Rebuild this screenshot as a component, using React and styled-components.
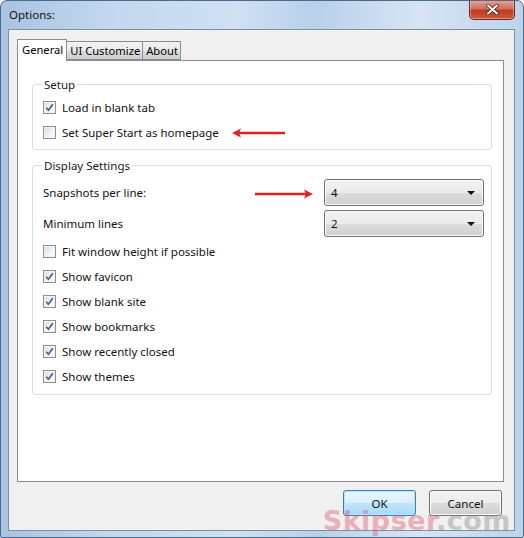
import styled, { createGlobalStyle } from "styled-components";

const GlobalStyle = createGlobalStyle`
  html, body {
    margin: 0;
    padding: 0;
    background: #ffffff;
  }
  body {
    font-family: "Noto Sans", "Open Sans", Arial, sans-serif;
    font-size: 11px;
    color: #000;
  }
`;

const Window = styled.div`
  position: relative;
  width: 524px;
  height: 538px;
  box-sizing: border-box;
  display: flex;
  flex-direction: column;
  padding: 0 8px 6px 7px;
  border: 1px solid #4e6a8a;
  border-radius: 7px 7px 2px 2px;
  background: linear-gradient(90deg, #a7c3e2 0%, #c2d7ee 20%, #cfe0f2 45%, #b9d0ea 60%, #d6e4f3 80%, #bcd3ea 100%);
  overflow: hidden;
`;

const TitleBar = styled.div`
  height: 28px;
  display: flex;
  align-items: flex-start;
`;

const Title = styled.div`
  align-self: center;
  padding-left: 1px;
  margin-top: -1px;
  font-size: 11.5px;
  color: #111;
`;

const CloseButton = styled.div`
  margin-left: auto;
  margin-top: -1px;
  width: 46px;
  height: 20px;
  box-sizing: border-box;
  border: 1px solid #6b2a20;
  border-top: none;
  border-radius: 0 0 5px 5px;
  background: linear-gradient(180deg, #e6a593 0%, #d0705a 45%, #b93d24 55%, #d2583a 100%);
  display: flex;
  align-items: center;
  justify-content: center;
  box-shadow: inset 0 0 0 1px rgba(255, 255, 255, 0.35);
`;

const Client = styled.div`
  flex: 1;
  display: flex;
  flex-direction: column;
  background: #f0f0f0;
  border: 1px solid #7c90a8;
  padding: 9px 12px 0 8px;
`;

const TabRow = styled.div`
  display: flex;
  align-items: flex-end;
  height: 21px;
  position: relative;
  z-index: 1;
`;

const Tab = styled.div`
  height: ${(p) => (p.$active ? "22px" : "19px")};
  box-sizing: border-box;
  padding: ${(p) => (p.$active ? "2px 3px 0 4px" : "1px 2px 0 3px")};
  border: 1px solid #898c95;
  border-bottom: ${(p) => (p.$active ? "none" : "1px solid #898c95")};
  margin-left: ${(p) => (p.$active ? "0" : "-1px")};
  margin-bottom: ${(p) => (p.$active ? "-1px" : "0")};
  background: ${(p) =>
    p.$active ? "#ffffff" : "linear-gradient(180deg, #f2f2f2 0%, #ebebeb 50%, #dddddd 51%, #cfcfcf 100%)"};
  font-size: 11.2px;
  line-height: 16px;
  white-space: nowrap;
`;

const Panel = styled.div`
  position: relative;
  width: 487px;
  height: 422px;
  box-sizing: border-box;
  background: #ffffff;
  border: 1px solid #898c95;
  padding: 16px 0 0 14px;
`;

const Group = styled.fieldset`
  width: 460px;
  box-sizing: border-box;
  margin: 0 0 ${(p) => p.$gap || 0}px 0;
  padding: ${(p) => p.$pad};
  border: 1px solid #d5dfe5;
  border-radius: 3px;
`;

const Legend = styled.legend`
  padding: 0 2px;
  margin-left: -1px;
  font-size: 11.5px;
  color: #1a1a1a;
`;

const CheckRow = styled.label`
  height: 25px;
  display: flex;
  align-items: center;
  gap: 6px;
  font-size: 11.5px;
  color: #111;
`;

const Box = styled.span`
  width: 13px;
  height: 13px;
  box-sizing: border-box;
  border: 1px solid #8f8f8f;
  background: linear-gradient(135deg, #dcdcdc 0%, #f4f4f4 60%, #ffffff 100%);
  box-shadow: inset 0 0 0 1px #f4f4f4;
  display: flex;
  align-items: center;
  justify-content: center;
`;

const SelectRow = styled.div`
  height: 31px;
  display: flex;
  align-items: center;
  justify-content: space-between;
  padding-right: 7px;
  font-size: 11.5px;
  color: #111;
`;

const Select = styled.div`
  width: 160px;
  height: 27px;
  box-sizing: border-box;
  border: 1px solid #707070;
  border-radius: 3px;
  background: linear-gradient(180deg, #f2f2f2 0%, #ebebeb 50%, #dddddd 51%, #cfcfcf 100%);
  display: flex;
  align-items: center;
  justify-content: space-between;
  padding: 0 8px 0 6px;
  font-size: 11.5px;
  box-shadow: inset 0 0 0 1px #fbfbfb;
`;

const Caret = styled.span`
  width: 0;
  height: 0;
  border-left: 4px solid transparent;
  border-right: 4px solid transparent;
  border-top: 4px solid #111;
`;

const Spacer = styled.div`
  height: ${(p) => p.$h}px;
`;

const Arrow = styled.div`
  position: absolute;
  left: ${(p) => p.$x}px;
  top: ${(p) => p.$y}px;
  line-height: 0;

  svg {
    display: block;
  }
`;

const Footer = styled.div`
  display: flex;
  justify-content: flex-end;
  gap: 13px;
  padding: 8px 2px 0 0;
  width: 487px;
  box-sizing: border-box;
`;

const Button = styled.div`
  width: 73px;
  height: 26px;
  box-sizing: border-box;
  border: 1px solid ${(p) => (p.$default ? "#3c7fb1" : "#707070")};
  border-radius: 3px;
  background: ${(p) =>
    p.$default
      ? "linear-gradient(180deg, #eaf6fd 0%, #d9f0fc 50%, #bee6fd 51%, #a7d9f5 100%)"
      : "linear-gradient(180deg, #f2f2f2 0%, #ebebeb 50%, #dddddd 51%, #cfcfcf 100%)"};
  box-shadow: inset 0 0 0 1px ${(p) => (p.$default ? "#b9e3f8" : "#fcfcfc")};
  display: flex;
  align-items: center;
  justify-content: center;
  font-size: 11.5px;
  color: #111;
`;

const Watermark = styled.div`
  position: absolute;
  right: 12px;
  bottom: 1px;
  font-family: "DejaVu Sans", Arial, sans-serif;
  font-weight: bold;
  font-size: 27px;
  letter-spacing: 0.5px;
  pointer-events: none;
  opacity: 0.4;
`;

const Mark = styled.span`
  color: ${(p) => p.$color};
`;

function Check({ checked }) {
  return (
    <Box>
      {checked && (
        <svg width="9" height="9" viewBox="0 0 9 9">
          <path d="M1.2 4.8 L3.4 7.3 L7.8 1.2" fill="none" stroke="#3d5c9a" strokeWidth="1.6" />
        </svg>
      )}
    </Box>
  );
}

function RedArrow({ left }) {
  return left ? (
    <svg width="56" height="10" viewBox="0 0 56 10">
      <line x1="8" y1="5" x2="54" y2="5" stroke="#e3201b" strokeWidth="2.4" />
      <path d="M1 5 L10 0.5 L8 5 L10 9.5 Z" fill="#e3201b" />
    </svg>
  ) : (
    <svg width="60" height="10" viewBox="0 0 60 10">
      <line x1="1" y1="5" x2="52" y2="5" stroke="#e3201b" strokeWidth="2.4" />
      <path d="M59 5 L50 0.5 L52 5 L50 9.5 Z" fill="#e3201b" />
    </svg>
  );
}

const displayChecks = [
  { label: "Fit window height if possible", checked: false },
  { label: "Show favicon", checked: true },
  { label: "Show blank site", checked: true },
  { label: "Show bookmarks", checked: true },
  { label: "Show recently closed", checked: true },
  { label: "Show themes", checked: true },
];

export default function App() {
  return (
    <>
      <GlobalStyle />
      <Window>
        <TitleBar>
          <Title>Options:</Title>
          <CloseButton>
            <svg width="13" height="11" viewBox="0 0 13 11">
              <path d="M2 1.5 L11 9.5 M11 1.5 L2 9.5" stroke="#4a1a12" strokeWidth="3.6" strokeLinecap="round" />
              <path d="M2 1.5 L11 9.5 M11 1.5 L2 9.5" stroke="#ffffff" strokeWidth="2" strokeLinecap="round" />
            </svg>
          </CloseButton>
        </TitleBar>
        <Client>
          <TabRow>
            <Tab $active>General</Tab>
            <Tab>UI Customize</Tab>
            <Tab>About</Tab>
          </TabRow>
          <Panel>
            <Group $pad="3px 0 4px 10px" $gap={8}>
              <Legend>Setup</Legend>
              <CheckRow>
                <Check checked />
                Load in blank tab
              </CheckRow>
              <CheckRow>
                <Check />
                Set Super Start as homepage
              </CheckRow>
            </Group>
            <Group $pad="4px 0 5px 10px">
              <Legend>Display Settings</Legend>
              <SelectRow>
                Snapshots per line:
                <Select>
                  4
                  <Caret />
                </Select>
              </SelectRow>
              <SelectRow>
                Minimum lines
                <Select>
                  2
                  <Caret />
                </Select>
              </SelectRow>
              <Spacer $h={0} />
              {displayChecks.map((c) => (
                <CheckRow key={c.label}>
                  <Check checked={c.checked} />
                  {c.label}
                </CheckRow>
              ))}
            </Group>
            <Arrow $x={213} $y={67}>
              <RedArrow left />
            </Arrow>
            <Arrow $x={236} $y={128}>
              <RedArrow />
            </Arrow>
          </Panel>
          <Footer>
            <Button $default>OK</Button>
            <Button>Cancel</Button>
          </Footer>
        </Client>
        <Watermark>
          <Mark $color="#e0506a">Skipser</Mark>
          <Mark $color="#8a8a8a">.com</Mark>
        </Watermark>
      </Window>
    </>
  );
}
